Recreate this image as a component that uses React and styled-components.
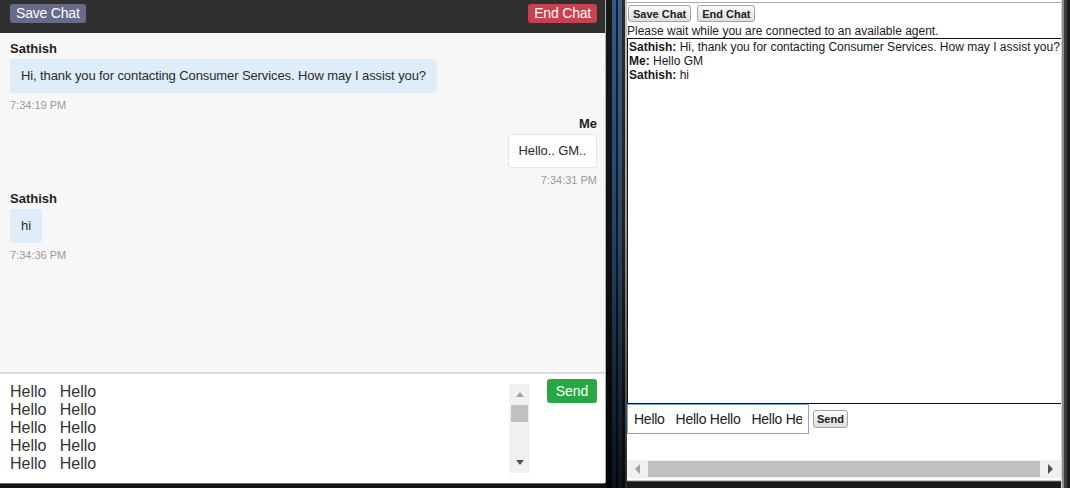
import React from 'react';
import styled, { createGlobalStyle } from 'styled-components';

const agentMessages = [
  { id: 1, from: 'Sathish', text: 'Hi, thank you for contacting Consumer Services. How may I assist you?', time: '7:34:19 PM', mine: false },
  { id: 2, from: 'Me', text: 'Hello.. GM..', time: '7:34:31 PM', mine: true },
  { id: 3, from: 'Sathish', text: 'hi', time: '7:34:36 PM', mine: false },
];

const transcript = [
  { id: 1, who: 'Sathish', text: 'Hi, thank you for contacting Consumer Services. How may I assist you?' },
  { id: 2, who: 'Me', text: 'Hello GM' },
  { id: 3, who: 'Sathish', text: 'hi' },
];

const draftLines = ['Hello   Hello', 'Hello   Hello', 'Hello   Hello', 'Hello   Hello', 'Hello   Hello'];

const GlobalStyle = createGlobalStyle`
  html, body {
    margin: 0;
    padding: 0;
    background: #161616;
  }
  body {
    font-family: "Liberation Sans", Arial, sans-serif;
  }
  * {
    box-sizing: border-box;
  }
`;

const Screen = styled.div`
  display: flex;
  width: 1070px;
  height: 488px;
  overflow: hidden;
  background: #161616;
`;

const LeftColumn = styled.div`
  width: 606px;
  height: 100%;
  background: #141414;
`;

const AgentPane = styled.section`
  width: 606px;
  height: 484px;
  display: flex;
  flex-direction: column;
  border-right: 1px solid #aab1b8;
  border-bottom: 1px solid #6a6a6a;
  border-bottom-right-radius: 3px;
  overflow: hidden;
  background: #fff;
`;

const Header = styled.div`
  height: 33px;
  flex: none;
  display: flex;
  align-items: flex-start;
  justify-content: space-between;
  padding: 4px 8px 0 10px;
  background: #303030;
`;

const HeadButton = styled.button`
  height: 19px;
  padding: 0 6px;
  border: none;
  border-radius: 3px;
  font-family: inherit;
  font-size: 14px;
  line-height: 19px;
  letter-spacing: -0.2px;
  color: #fff;
  background: ${({ $tone }) => ($tone === 'end' ? '#c8414e' : '#666b89')};
`;

const Messages = styled.div`
  flex: 1;
  display: flex;
  flex-direction: column;
  gap: 4px;
  padding: 8px 8px 0 10px;
  background: #f7f7f7;
`;

const Group = styled.div`
  display: flex;
  flex-direction: column;
  align-items: ${({ $mine }) => ($mine ? 'flex-end' : 'flex-start')};
`;

const Name = styled.div`
  font-size: 13px;
  font-weight: bold;
  line-height: 16px;
  color: #1e1e1e;
`;

const Bubble = styled.div`
  margin-top: 2px;
  padding: ${({ $mine }) => ($mine ? '8px 10px' : '9px 11px')};
  font-size: 13px;
  line-height: 16px;
  letter-spacing: -0.1px;
  color: #2b2b2b;
  border-radius: 3px;
  background: ${({ $mine }) => ($mine ? '#fff' : '#deedf9')};
  border: ${({ $mine }) => ($mine ? '1px solid #e4e4e4' : 'none')};
`;

const Time = styled.div`
  margin-top: 5px;
  font-size: 11px;
  line-height: 14px;
  color: #9a9a9a;
`;

const Composer = styled.div`
  height: 111px;
  flex: none;
  display: flex;
  align-items: flex-start;
  padding: 5px 8px 0 10px;
  border-top: 2px solid #d9dee3;
  background: #fff;
`;

const Draft = styled.div`
  width: 520px;
  display: flex;
`;

const DraftText = styled.div`
  flex: 1;
  padding-top: 4px;
  font-size: 16px;
  line-height: 18px;
  color: #333;
  white-space: pre;
`;

const VScroll = styled.div`
  width: 21px;
  height: 89px;
  margin-top: 5px;
  display: flex;
  flex-direction: column;
  align-items: center;
  background: #f1f1f1;
`;

const ArrowBox = styled.div`
  width: 100%;
  height: 21px;
  display: flex;
  align-items: center;
  justify-content: center;
  margin-top: ${({ $end }) => ($end ? 'auto' : '0')};
`;

const arrowShape = {
  up: 'border-left: 4px solid transparent; border-right: 4px solid transparent; border-bottom: 5px solid #a3a3a3;',
  down: 'border-left: 4px solid transparent; border-right: 4px solid transparent; border-top: 5px solid #505050;',
  left: 'border-top: 5px solid transparent; border-bottom: 5px solid transparent; border-right: 5px solid #a3a3a3;',
  right: 'border-top: 5px solid transparent; border-bottom: 5px solid transparent; border-left: 5px solid #505050;',
};

const Arrow = styled.span`
  width: 0;
  height: 0;
  ${({ $dir }) => arrowShape[$dir]}
`;

const VThumb = styled.div`
  width: 17px;
  height: 17px;
  background: #c1c1c1;
`;

const SendButton = styled.button`
  width: 50px;
  height: 24px;
  margin-left: 17px;
  padding: 0;
  border: none;
  border-radius: 3px;
  font-family: inherit;
  font-size: 14px;
  color: #fff;
  background: #28a745;
`;

const Divider = styled.div`
  width: 21px;
  flex: none;
  height: 100%;
  background:
    linear-gradient(rgba(0, 0, 0, 0) 0%, rgba(0, 0, 0, 0.25) 45%, rgba(0, 0, 0, 0.8) 100%),
    linear-gradient(90deg, #171717 0 6px, #2b5d90 6px 10px, #0f1d2c 10px 12px, #3e6084 12px 16px, #2b2b2b 16px 19px, #c4c8cc 19px 21px);
`;

const WindowFrame = styled.div`
  flex: 1;
  height: 100%;
  padding: 0 9px 8px 0;
  background:
    linear-gradient(90deg, #d4d4d4 0 1px, #8d8d8d 1px 3px, #3c3c3c 3px 6px, #1b1b1b 6px) right top / 9px 100% no-repeat,
    linear-gradient(#c6c6c6 0 1px, #4c4c4c 1px 2px, #1a1a1a 2px) left bottom / 100% 8px no-repeat,
    #1b1b1b;
`;

const WindowBody = styled.div`
  height: 100%;
  display: flex;
  flex-direction: column;
  padding-top: 2px;
  background: #fff;
  overflow: hidden;
`;

const Toolbar = styled.div`
  display: flex;
  gap: 6px;
  padding: 2px 0 0 1px;
  border-top: 1px solid #a8a8a8;
`;

const PlainButton = styled.button`
  height: ${({ $small }) => ($small ? '18px' : '17px')};
  padding: 0 ${({ $small }) => ($small ? '3px' : '4px')};
  border: 1px solid #a3a3a3;
  border-radius: 3px;
  font-family: inherit;
  font-size: 11px;
  font-weight: bold;
  color: #222;
  background: linear-gradient(#fbfbfb, #dedede);
  margin-left: ${({ $small }) => ($small ? '4px' : '0')};
`;

const Notice = styled.div`
  margin-top: 2px;
  font-size: 12px;
  line-height: 14px;
  color: #222;
`;

const Transcript = styled.div`
  height: 366px;
  flex: none;
  padding: 1px 0 0 1px;
  border: 1px solid #111;
  border-right: none;
  font-size: 12px;
  line-height: 14px;
  color: #1a1a1a;
  overflow: hidden;
`;

const Line = styled.div`
  white-space: nowrap;
`;

const InputRow = styled.div`
  display: flex;
  align-items: center;
`;

const TextInput = styled.input`
  width: 182px;
  height: 30px;
  padding: 0 6px;
  border: 1px solid #7ea6d8;
  font-family: inherit;
  font-size: 14px;
  letter-spacing: -0.25px;
  color: #222;
  outline: none;
`;

const HScroll = styled.div`
  height: 18px;
  margin-top: auto;
  margin-bottom: 2px;
  display: flex;
  align-items: center;
  background: #f0f0f0;
`;

const HArrowBox = styled.div`
  width: 21px;
  height: 100%;
  display: flex;
  align-items: center;
  justify-content: center;
`;

const HThumb = styled.div`
  flex: 1;
  height: 16px;
  background: #c1c1c1;
`;

function App() {
  return (
    <>
      <GlobalStyle />
      <Screen>
        <LeftColumn>
          <AgentPane>
            <Header>
              <HeadButton $tone="save">Save Chat</HeadButton>
              <HeadButton $tone="end">End Chat</HeadButton>
            </Header>
            <Messages>
              {agentMessages.map((m) => (
                <Group key={m.id} $mine={m.mine}>
                  <Name>{m.from}</Name>
                  <Bubble $mine={m.mine}>{m.text}</Bubble>
                  <Time>{m.time}</Time>
                </Group>
              ))}
            </Messages>
            <Composer>
              <Draft>
                <DraftText>
                  {draftLines.map((line, i) => (
                    <div key={i}>{line}</div>
                  ))}
                </DraftText>
                <VScroll>
                  <ArrowBox>
                    <Arrow $dir="up" />
                  </ArrowBox>
                  <VThumb />
                  <ArrowBox $end>
                    <Arrow $dir="down" />
                  </ArrowBox>
                </VScroll>
              </Draft>
              <SendButton>Send</SendButton>
            </Composer>
          </AgentPane>
        </LeftColumn>

        <Divider />

        <WindowFrame>
          <WindowBody>
            <Toolbar>
              <PlainButton>Save Chat</PlainButton>
              <PlainButton>End Chat</PlainButton>
            </Toolbar>
            <Notice>Please wait while you are connected to an available agent.</Notice>
            <Transcript>
              {transcript.map((t) => (
                <Line key={t.id}>
                  <b>{t.who}:</b> {t.text}
                </Line>
              ))}
            </Transcript>
            <InputRow>
              <TextInput readOnly value="Hello   Hello Hello   Hello He" />
              <PlainButton $small>Send</PlainButton>
            </InputRow>
            <HScroll>
              <HArrowBox>
                <Arrow $dir="left" />
              </HArrowBox>
              <HThumb />
              <HArrowBox>
                <Arrow $dir="right" />
              </HArrowBox>
            </HScroll>
          </WindowBody>
        </WindowFrame>
      </Screen>
    </>
  );
}

export default App;
